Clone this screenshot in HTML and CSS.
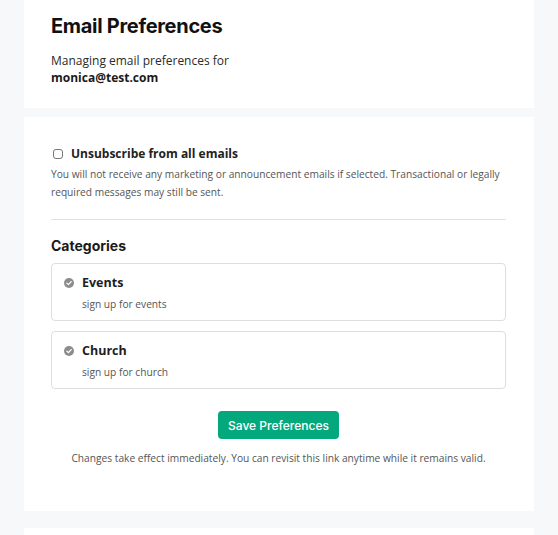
FILE: index.html
```html
<!DOCTYPE html>
<html>
<head>
<meta charset="utf-8">
<link rel="stylesheet" href="styles.css">
</head>
<body>
<div class="page">
  <section class="card card-head">
    <h1 class="title">Email Preferences</h1>
    <p class="intro">Managing email preferences for<br><strong>monica@test.com</strong></p>
  </section>
  <section class="card card-main">
    <label class="unsub">
      <span class="box"></span>
      <span class="unsub-label">Unsubscribe from all emails</span>
    </label>
    <p class="note">You will not receive any marketing or announcement emails if selected. Transactional or legally required messages may still be sent.</p>
    <hr class="divider">
    <h2 class="cats-title">Categories</h2>
    <div class="cat">
      <div class="cat-row">
        <svg class="check" viewBox="0 0 10 10" width="10" height="10"><circle cx="5" cy="5" r="5" fill="#8c8c8c"/><path d="M2.8 5.1 L4.4 6.6 L7.2 3.6" fill="none" stroke="#fff" stroke-width="1.3" stroke-linecap="round" stroke-linejoin="round"/></svg>
        <span class="cat-name">Events</span>
      </div>
      <div class="cat-desc">sign up for events</div>
    </div>
    <div class="cat">
      <div class="cat-row">
        <svg class="check" viewBox="0 0 10 10" width="10" height="10"><circle cx="5" cy="5" r="5" fill="#8c8c8c"/><path d="M2.8 5.1 L4.4 6.6 L7.2 3.6" fill="none" stroke="#fff" stroke-width="1.3" stroke-linecap="round" stroke-linejoin="round"/></svg>
        <span class="cat-name">Church</span>
      </div>
      <div class="cat-desc">sign up for church</div>
    </div>
    <div class="actions">
      <button class="save">Save Preferences</button>
      <p class="foot">Changes take effect immediately. You can revisit this link anytime while it remains valid.</p>
    </div>
  </section>
  <section class="card card-next"></section>
</div>
</body>
</html>
```
FILE: styles.css
```css
html, body {
  margin: 0;
  padding: 0;
  background: #f7f8fa;
}
body {
  font-family: "Open Sans", "Liberation Sans", sans-serif;
  color: #1f1f1f;
}
.page {
  width: 510px;
  margin-left: 24px;
}
.card {
  background: #fff;
}
.card-head {
  height: 108px;
  box-sizing: border-box;
  padding: 13px 27px 0 27px;
  margin-bottom: 9px;
}
.title {
  font-family: Inter, "Liberation Sans", sans-serif;
  font-size: 20px;
  font-weight: 700;
  line-height: 26px;
  margin: 0;
  color: #111;
  letter-spacing: -0.3px;
}
.intro {
  margin: 13px 0 0 0;
  font-size: 12px;
  line-height: 17px;
  color: #2a2a2a;
}
.intro strong {
  font-weight: 700;
  color: #1a1a1a;
}
.card-main {
  height: 394px;
  box-sizing: border-box;
  padding: 26px 28px 0 27px;
  margin-bottom: 17px;
}
.unsub {
  display: flex;
  align-items: center;
  gap: 8px;
  padding-left: 2px;
  height: 20px;
}
.box {
  width: 8px;
  height: 8px;
  border: 1px solid #777;
  border-radius: 3px;
  background: #fff;
  margin-top: 2px;
}
.unsub-label {
  font-size: 12px;
  font-weight: 700;
  color: #222;
}
.note {
  margin: 2px 0 0 0;
  font-size: 10.2px;
  line-height: 18px;
  color: #555;
}
.divider {
  border: 0;
  border-top: 1px solid #e2e2e2;
  margin: 18px 0 0 0;
}
.cats-title {
  font-family: Inter, "Liberation Sans", sans-serif;
  font-size: 14px;
  font-weight: 700;
  line-height: 18px;
  margin: 17px 0 0 0;
  color: #1a1a1a;
}
.cat {
  border: 1px solid #dedede;
  border-radius: 4px;
  height: 58px;
  box-sizing: border-box;
  padding: 9px 0 0 12px;
  margin-top: 8px;
}
.cat + .cat {
  margin-top: 10px;
}
.cat-row {
  display: flex;
  align-items: center;
  gap: 8px;
  height: 18px;
}
.check {
  display: block;
  margin-top: 2px;
}
.cat-name {
  font-size: 12.5px;
  font-weight: 700;
  color: #1e1e1e;
}
.cat-desc {
  margin: 4px 0 0 18px;
  font-size: 10.2px;
  line-height: 18px;
  color: #555;
}
.actions {
  display: flex;
  flex-direction: column;
  align-items: center;
  margin-top: 22px;
}
.save {
  font-family: Inter, "Liberation Sans", sans-serif;
  font-size: 12px;
  font-weight: 500;
  color: #fff;
  background: #03a97c;
  border: 0;
  border-radius: 4px;
  height: 28px;
  padding: 0 10px;
  cursor: pointer;
}
.foot {
  margin: 10px 0 0 0;
  font-size: 10.2px;
  line-height: 18px;
  color: #555;
}
.card-next {
  height: 20px;
}
```
